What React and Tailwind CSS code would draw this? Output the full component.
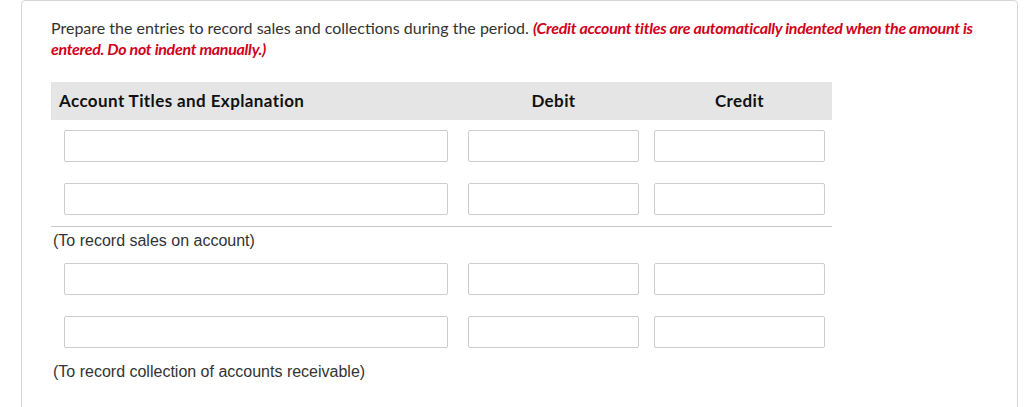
import React from 'react';

// Eingabezeile: Konto, Soll, Haben
function EntryRow() {
  return (
    <div className="flex pt-[10px] pb-[11px]">
      <input className="ml-[13px] w-[384px] h-[32px] border border-[#cccccc] rounded-[2px] bg-white" />
      <input className="ml-[20px] w-[171px] h-[32px] border border-[#cccccc] rounded-[2px] bg-white" />
      <input className="ml-[15px] w-[171px] h-[32px] border border-[#cccccc] rounded-[2px] bg-white" />
    </div>
  );
}

export default function App() {
  return (
    <div className="bg-white w-[1027px] h-[407px] overflow-hidden">
      <div className="ml-[21px] w-[997px] h-[440px] border border-[#d6d6d6] rounded-[4px] pt-[16px] pl-[29px]">
        {/* Aufgabenstellung */}
        <p className="font-['Lato',sans-serif] text-[16px] leading-[21px] text-[#333333] w-[940px]">
          Prepare the entries to record sales and collections during the period.{' '}
          <span className="font-bold italic text-[#d0021b] tracking-[-0.3px]">
            (Credit account titles are automatically indented when the amount is entered. Do not indent manually.)
          </span>
        </p>

        {/* Tabelle */}
        <div className="mt-[23px] w-[781px]">
          <div className="flex items-center h-[38px] bg-[#e5e5e5] font-['Lato',sans-serif] font-bold text-[17px] tracking-[0.4px] text-[#111111]">
            <div className="w-[417px] pl-[8px]">Account Titles and Explanation</div>
            <div className="w-[171px] text-center">Debit</div>
            <div className="ml-[15px] w-[171px] text-center">Credit</div>
          </div>

          <EntryRow />
          <div className="border-b border-[#c8c8c8]">
            <EntryRow />
          </div>
          <div className="pt-[4px] pl-[2px] font-['Liberation_Sans',Arial,sans-serif] text-[16px] leading-[20px] text-[#333333]">
            (To record sales on account)
          </div>

          <div className="pt-[2px]">
            <EntryRow />
            <EntryRow />
          </div>
          <div className="pt-[3px] pl-[2px] font-['Liberation_Sans',Arial,sans-serif] text-[16px] leading-[20px] text-[#333333]">
            (To record collection of accounts receivable)
          </div>
        </div>
      </div>
    </div>
  );
}
